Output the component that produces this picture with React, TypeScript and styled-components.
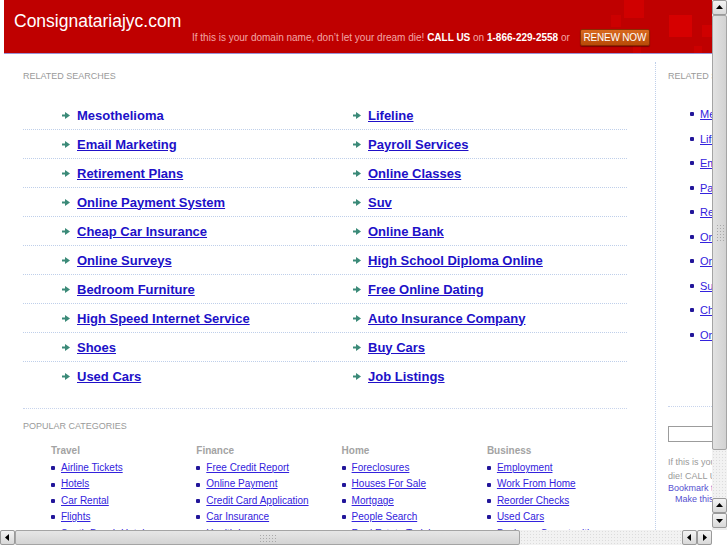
import * as React from 'react'
import styled, { createGlobalStyle } from 'styled-components'

const searches = [
    'Mesothelioma', 'Lifeline',
    'Email Marketing', 'Payroll Services',
    'Retirement Plans', 'Online Classes',
    'Online Payment System', 'Suv',
    'Cheap Car Insurance', 'Online Bank',
    'Online Surveys', 'High School Diploma Online',
    'Bedroom Furniture', 'Free Online Dating',
    'High Speed Internet Service', 'Auto Insurance Company',
    'Shoes', 'Buy Cars',
    'Used Cars', 'Job Listings',
]

const sideSearches = [
    'Mesothelioma', 'Lifeline', 'Email Marketing', 'Payroll Services', 'Retirement Plans',
    'Online Classes', 'Online Payment System', 'Suv', 'Cheap Car Insurance', 'Online Bank',
]

const categories = [
    { title: 'Travel', links: ['Airline Tickets', 'Hotels', 'Car Rental', 'Flights', 'South Beach Hotels'] },
    { title: 'Finance', links: ['Free Credit Report', 'Online Payment', 'Credit Card Application', 'Car Insurance', 'Health Insurance'] },
    { title: 'Home', links: ['Foreclosures', 'Houses For Sale', 'Mortgage', 'People Search', 'Real Estate Training'] },
    { title: 'Business', links: ['Employment', 'Work From Home', 'Reorder Checks', 'Used Cars', 'Business Opportunities'] },
]

const GlobalStyle = createGlobalStyle`
    html, body {
        margin: 0;
        padding: 0;
        background: #fff;
        overflow: hidden;
    }
    body {
        font-family: "Liberation Sans", Arial, sans-serif;
    }
`

const Arrow = () => (
    <svg width="8" height="7" viewBox="0 0 8 7">
        <rect x="0" y="2.5" width="4" height="2" fill="#3b8a78" />
        <polygon points="3,0 8,3.5 3,7" fill="#3b8a78" />
    </svg>
)

const Tri = ({ dir }: { dir: 'up' | 'down' | 'left' | 'right' }) => {
    const pts = {
        up: '1,6 4.5,2 8,6',
        down: '1,3 4.5,7 8,3',
        left: '6,1 2,4.5 6,8',
        right: '3,1 7,4.5 3,8',
    }[dir]
    return (
        <svg width="9" height="9" viewBox="0 0 9 9">
            <polygon points={pts} fill="#000" />
        </svg>
    )
}

const App = () => (
    <Window>
        <GlobalStyle />
        <Viewport>
            <Page>
                <Header>
                    <Squares width="110" height="53" viewBox="0 0 110 53">
                        <rect x="20" y="0" width="20" height="18" fill="#d00000" />
                        <rect x="7" y="15" width="10" height="12" fill="#cc0000" />
                        <rect x="65" y="15" width="23" height="22" fill="#d60000" />
                        <rect x="98" y="25" width="10" height="12" fill="#cf0000" />
                        <rect x="29" y="46" width="8" height="7" fill="#cc0000" />
                        <rect x="90" y="46" width="8" height="7" fill="#cc0000" />
                    </Squares>
                    <Title>Consignatariajyc.com</Title>
                    <Tagline>
                        <span>
                            If this is your domain name, don’t let your dream die! <b>CALL US</b> on{' '}
                            <b>1-866-229-2558</b> or
                        </span>
                        <RenewButton>RENEW NOW</RenewButton>
                    </Tagline>
                </Header>
                <Body>
                    <Main>
                        <SectionLabel>Related Searches</SectionLabel>
                        <SearchGrid>
                            {searches.map((s, i) => (
                                <SearchItem key={s + i} last={i >= searches.length - 2}>
                                    <Arrow />
                                    <SearchLink plain={i === 0}>{s}</SearchLink>
                                </SearchItem>
                            ))}
                        </SearchGrid>
                        <Divider />
                        <SectionLabel>Popular Categories</SectionLabel>
                        <CategoryGrid>
                            {categories.map(c => (
                                <Category key={c.title}>
                                    <CategoryTitle>{c.title}</CategoryTitle>
                                    {c.links.map(l => (
                                        <CategoryLink key={l}>
                                            <Bullet />
                                            <a>{l}</a>
                                        </CategoryLink>
                                    ))}
                                </Category>
                            ))}
                        </CategoryGrid>
                    </Main>
                    <Sidebar>
                        <SectionLabel>Related Searches</SectionLabel>
                        <SideList>
                            {sideSearches.map(s => (
                                <SideItem key={s}>
                                    <Bullet />
                                    <a>{s}</a>
                                </SideItem>
                            ))}
                        </SideList>
                        <SideDivider />
                        <SearchBox />
                        <SideNote>
                            If this is your domain name, don’t let your dream die! CALL US on 1-866-229-2558
                        </SideNote>
                        <SideLink>Bookmark this page</SideLink>
                        <SideLink indent>Make this page your homepage</SideLink>
                    </Sidebar>
                </Body>
            </Page>
        </Viewport>
        <VScroll>
            <ScrollButton><Tri dir="up" /></ScrollButton>
            <VThumb><Grip vertical /></VThumb>
            <Track />
            <ScrollButton><Tri dir="up" /></ScrollButton>
            <ScrollButton><Tri dir="down" /></ScrollButton>
            <TrackEnd />
        </VScroll>
        <HScroll>
            <ScrollButton><Tri dir="left" /></ScrollButton>
            <HThumb><Grip /></HThumb>
            <Track />
            <ScrollButton><Tri dir="left" /></ScrollButton>
            <ScrollButton><Tri dir="right" /></ScrollButton>
        </HScroll>
        <Corner />
    </Window>
)

const Window = styled.div`
    display: grid;
    grid-template-columns: 712px 15px;
    grid-template-rows: 530px 15px;
    width: 727px;
    height: 545px;
`

const Viewport = styled.div`
    overflow: hidden;
    background: #fff;
`

const Page = styled.div`
    width: 920px;
`

const Header = styled.header`
    position: relative;
    height: 53px;
    margin-left: 4px;
    background: #bf0000;
    border-bottom: 1px solid #9c92d4;
    overflow: hidden;
`

const Squares = styled.svg`
    position: absolute;
    left: 600px;
    top: 0;
`

const Title = styled.div`
    position: relative;
    padding: 11px 0 0 10px;
    height: 20px;
    font-size: 17.5px;
    line-height: 20px;
    color: #fff;
`

const Tagline = styled.div`
    position: relative;
    display: flex;
    align-items: center;
    gap: 10px;
    margin-top: -2px;
    padding-left: 188px;
    font-size: 10px;
    color: #f2a6a6;
    white-space: nowrap;

    b {
        color: #fff;
    }
`

const RenewButton = styled.span`
    display: inline-flex;
    align-items: center;
    justify-content: center;
    width: 70px;
    height: 17px;
    box-sizing: border-box;
    border: 1px solid #8a2c00;
    border-radius: 2px;
    background: linear-gradient(#d8691e, #b84a08);
    box-shadow: 0 1px 1px rgba(0, 0, 0, 0.35);
    color: #fff;
    font-size: 10px;
    letter-spacing: -0.2px;
`

const Body = styled.div`
    display: flex;
    margin-top: 8px;
`

const Main = styled.main`
    width: 656px;
    box-sizing: border-box;
    padding: 9px 28px 0 23px;
    border-right: 1px dotted #bfcfea;
`

const SectionLabel = styled.div`
    height: 11px;
    font-size: 9px;
    line-height: 11px;
    color: #9a9a9a;
    text-transform: uppercase;
    white-space: nowrap;
`

const SearchGrid = styled.div`
    display: grid;
    grid-template-columns: 291px 1fr;
    margin-top: 19px;
`

const SearchItem = styled.div<{ last?: boolean }>`
    display: flex;
    align-items: center;
    gap: 7px;
    height: 28px;
    padding-left: 39px;
    border-bottom: 1px dotted ${p => (p.last ? 'transparent' : '#bfcfea')};
`

const SearchLink = styled.a<{ plain?: boolean }>`
    font-size: 13px;
    font-weight: bold;
    color: #2010c8;
    text-decoration: ${p => (p.plain ? 'none' : 'underline')};
    white-space: nowrap;
`

const Divider = styled.div`
    margin-top: 17px;
    margin-bottom: 12px;
    border-top: 1px dotted #c8d4ec;
`

const CategoryGrid = styled.div`
    display: grid;
    grid-template-columns: repeat(4, 145.3px);
    margin-top: 13px;
    padding-left: 28px;
`

const Category = styled.div`
    display: flex;
    flex-direction: column;
`

const CategoryTitle = styled.div`
    font-size: 10px;
    line-height: 12px;
    font-weight: bold;
    color: #a3a3a3;
    margin-bottom: 3px;
`

const Bullet = styled.span`
    display: inline-block;
    width: 4px;
    height: 4px;
    border-radius: 1px;
    background: #22169a;
    flex: none;
`

const CategoryLink = styled.div`
    display: flex;
    align-items: center;
    gap: 6px;
    font-size: 10px;
    line-height: 16.4px;
    white-space: nowrap;

    a {
        color: #3322dd;
        text-decoration: underline;
    }
`

const Sidebar = styled.aside`
    width: 230px;
    padding: 9px 0 0 12px;
`

const SideList = styled.div`
    margin-top: 20px;
    padding-left: 22px;
`

const SideItem = styled.div`
    display: flex;
    align-items: center;
    gap: 6px;
    height: 24.5px;
    font-size: 11px;
    white-space: nowrap;

    a {
        color: #3322dd;
        text-decoration: underline;
    }
`

const SideDivider = styled.div`
    margin-top: 59px;
    border-top: 1px dotted #c8d4ec;
`

const SearchBox = styled.div`
    width: 110px;
    height: 16px;
    margin-top: 19px;
    box-sizing: border-box;
    border: 1px solid #9c9c9c;
`

const SideNote = styled.div`
    width: 196px;
    margin-top: 13px;
    font-size: 9px;
    line-height: 14px;
    color: #9a9a9a;
`

const SideLink = styled.div<{ indent?: boolean }>`
    font-size: 9px;
    line-height: 11px;
    color: #5550d0;
    padding-left: ${p => (p.indent ? '7px' : '0')};
    white-space: nowrap;
`

const VScroll = styled.div`
    display: flex;
    flex-direction: column;
    background: #ececec;
`

const HScroll = styled.div`
    display: flex;
    background: #ececec;
`

const ScrollButton = styled.div`
    display: flex;
    align-items: center;
    justify-content: center;
    width: 15px;
    height: 15px;
    box-sizing: border-box;
    flex: none;
    border: 1px solid #9a9a9a;
    border-radius: 2px;
    background: linear-gradient(#f4f4f4, #d8d8d8);
`

const VThumb = styled.div`
    display: flex;
    align-items: center;
    justify-content: center;
    height: 435px;
    flex: none;
    box-sizing: border-box;
    border: 1px solid #a4a4a4;
    border-radius: 2px;
    background: linear-gradient(90deg, #e2e2e2, #d2d2d2);
`

const HThumb = styled.div`
    display: flex;
    align-items: center;
    justify-content: center;
    width: 505px;
    flex: none;
    box-sizing: border-box;
    border: 1px solid #a4a4a4;
    border-radius: 2px;
    background: linear-gradient(#e6e6e6, #d4d4d4);
`

const Grip = styled.div<{ vertical?: boolean }>`
    width: ${p => (p.vertical ? '8px' : '18px')};
    height: ${p => (p.vertical ? '18px' : '8px')};
    background-image: radial-gradient(circle, #a8a8a8 0.8px, transparent 1px);
    background-size: 3px 3px;
`

const Track = styled.div`
    flex: 1;
    background-color: #f2f2f2;
    background-image: radial-gradient(circle, #dcdcdc 0.6px, transparent 0.8px);
    background-size: 3px 3px;
`

const TrackEnd = styled.div`
    height: 2px;
    flex: none;
`

const Corner = styled.div`
    background: #fff;
`

export default App
